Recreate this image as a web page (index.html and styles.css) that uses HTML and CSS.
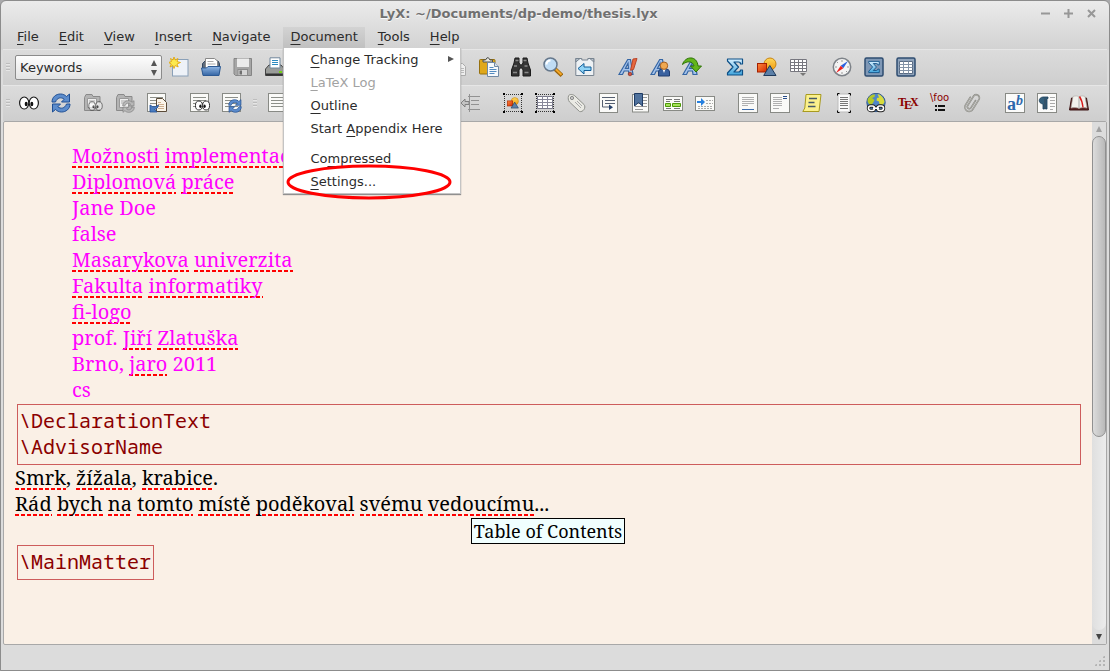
FILE: index.html
```
<!DOCTYPE html>
<html lang="en">
  <head>
    <meta charset="UTF-8" />
    <meta name="viewport" content="width=device-width, initial-scale=1.0" />
    <title>LyX: ~/Documents/dp-demo/thesis.lyx</title>
    <link rel="stylesheet" href="styles.css">
  </head>

  <body>
    <!-- Icon sprite -->
    <svg class="sprite" aria-hidden="true">
      <defs>
        <linearGradient id="g-blue" x1="0" y1="0" x2="0" y2="1">
          <stop offset="0" stop-color="#8fb6e4" /><stop offset="1" stop-color="#3465a4" />
        </linearGradient>
        <linearGradient id="g-sky" x1="0" y1="0" x2="0" y2="1">
          <stop offset="0" stop-color="#d8f0ff" /><stop offset="1" stop-color="#3fa4dc" />
        </linearGradient>
        <linearGradient id="g-orange" x1="0" y1="0" x2="0" y2="1">
          <stop offset="0" stop-color="#ffd95a" /><stop offset="1" stop-color="#f09a10" />
        </linearGradient>
        <linearGradient id="g-red" x1="0" y1="0" x2="1" y2="1">
          <stop offset="0" stop-color="#ff8a3c" /><stop offset="1" stop-color="#d42a00" />
        </linearGradient>
      </defs>

      <!-- shared pieces -->
      <symbol id="eyes" viewBox="0 0 20 14">
        <ellipse cx="5.2" cy="7" rx="4.6" ry="6" fill="#fff" stroke="#1c1c1c" stroke-width="1.2" />
        <ellipse cx="14.8" cy="7" rx="4.6" ry="6" fill="#fff" stroke="#1c1c1c" stroke-width="1.2" />
        <ellipse cx="7.2" cy="8" rx="1.5" ry="2.2" fill="#111" />
        <ellipse cx="12.8" cy="8" rx="1.5" ry="2.2" fill="#111" />
      </symbol>
      <symbol id="arrows" viewBox="0 0 20 20">
        <path d="M1 9C1 4 5 1 9.500 1c2.500 0 4.500 1 6 2.500L18.500 1v8h-8l2.700-2.800C10.500 3.800 6 4.500 4.500 9z" stroke-width="1" />
        <path d="M19 11c0 5-4 8-8.500 8-2.500 0-4.500-1-6-2.500L1.500 19v-8h8l-2.700 2.800c2.700 2.400 7.200 1.700 8.700-2.800z" stroke-width="1" />
      </symbol>
      <symbol id="page" viewBox="0 0 20 20">
        <rect x=".5" y=".5" width="18" height="18" fill="#fafaf8" stroke="#888a85" />
        <path d="M3 4.500h13M3 7.500h13M3 10.500h13M3 13.500h13" stroke="#8c8f89" />
      </symbol>
      <symbol id="letter-a" viewBox="0 0 20 20">
        <path d="M1 17.500h3.500l1.700-3.500h4.300l.5 3.500h4L12.500 2.500H9.700zM7.500 11.300l2.500-5 .5 5z" fill="#a4c2ea" stroke="#3465a4" stroke-width="1.200" fill-rule="evenodd" />
      </symbol>
      <symbol id="sigma" viewBox="0 0 20 20">
        <path d="M2.500 2h15v5h-2c0-1.500-.8-2-2-2H9l4.500 5L9 15h4.500c1.200 0 2-.8 2-2h2v5h-15v-2L8 10 2.500 4z" fill="url(#g-sky)" stroke="#0d4f86" stroke-width="1.200" stroke-linejoin="round" />
      </symbol>
      <symbol id="shapes" viewBox="0 0 20 20">
        <circle cx="13" cy="7" r="6" fill="url(#g-orange)" stroke="#c88410" />
        <rect x=".5" y="6.500" width="9" height="8.500" fill="url(#g-red)" stroke="#a42000" />
        <path d="M12.800 8.500L19 18.500H6.700z" fill="#5c80a8" stroke="#1f3a5c" stroke-linejoin="round" />
      </symbol>
      <symbol id="frame" viewBox="0 0 20 20">
        <path d="M1 1.500h18M1 18.500h18M1.500 1v18M18.500 1v18" stroke="#333" stroke-dasharray="1 1" />
        <path d="M0 0h2v2H0zM18 0h2v2h-2zM0 18h2v2H0zM18 18h2v2h-2z" fill="#000" />
      </symbol>

      <!-- standard toolbar -->
      <symbol id="i-new" viewBox="0 0 20 20">
        <rect x="3.500" y="2.500" width="15.500" height="16.500" fill="#eef2f8" stroke="#8aa0b8" />
        <path d="M5 0l1.200 3L9 1.500 8 4.500l3.500 1L8 7l1.200 3-3-1.500L5 11.500 4 8.500 1 10l1.300-3L-.5 5.500l3-1L1.500 1.500 4 3z" fill="#fce94f" stroke="#e0a000" stroke-width=".8" />
      </symbol>
      <symbol id="i-open" viewBox="0 0 20 20">
        <path d="M1.500 15V6.500L4 4h13l1.500 2.500V15" fill="#5e6b7c" stroke="#33475f" />
        <path d="M4.500 11V1.500h9l3 2.500v7z" fill="#fff" stroke="#888" />
        <path d="M6.500 4.500h6M6.500 7h8" stroke="#aaa" />
        <path d="M.5 11h5l1.500-1.500h12.500L18 18.500H2z" fill="url(#g-blue)" stroke="#2d5a94" />
      </symbol>
      <symbol id="i-save" viewBox="0 0 20 20">
        <path d="M1 1.500h17.500v17H2.500L1 17z" fill="#a6a6a6" stroke="#858585" />
        <rect x="4" y="1.500" width="12" height="8.500" fill="#ececec" />
        <rect x="5" y="12.500" width="9.500" height="6" fill="#d5d5d5" stroke="#8c8c8c" />
        <rect x="6.500" y="13.500" width="2.500" height="4" fill="#6f6f6f" />
      </symbol>
      <symbol id="i-print" viewBox="0 0 20 20">
        <path d="M.5 12L4 8h12l3.500 4v6.500H.5z" fill="#9a9c99" stroke="#444" />
        <path d="M5 11V.8h10V11z" fill="#fff" stroke="#71879c" />
        <path d="M7 3.500h6M7 5.500h6M7 7.500h6" stroke="#2c8ac0" />
        <path d="M1 17.500h18" stroke="#333" stroke-width="2" /><path d="M14 15h3" stroke="#73d216" stroke-width="2" />
      </symbol>
      <symbol id="i-undo" viewBox="0 0 20 20"><path d="M2 8l6-6v4c7 0 10 5 8 11-1-4-3-6-8-6v4z" fill="#aaa" stroke="#888" /></symbol>
      <symbol id="i-redo" viewBox="0 0 20 20"><path d="M18 8l-6-6v4C5 6 2 11 4 17c1-4 3-6 8-6v4z" fill="#aaa" stroke="#888" /></symbol>
      <symbol id="i-cut" viewBox="0 0 20 20"><path d="M5 2l7 12M15 2L8 14" stroke="#888" stroke-width="2" /><circle cx="6" cy="16" r="2.500" fill="none" stroke="#888" stroke-width="2" /><circle cx="14" cy="16" r="2.500" fill="none" stroke="#888" stroke-width="2" /></symbol>
      <symbol id="i-copy" viewBox="0 0 20 20">
        <rect x="2.500" y="1.500" width="10" height="13" fill="#eee" stroke="#999" />
        <path d="M8.500 6.500h7l3 3v9h-10z" fill="#eee" stroke="#aaa" /><path d="M10 11.500h7M10 13.500h7M10 15.500h7" stroke="#bbb" />
      </symbol>
      <symbol id="i-paste" viewBox="0 0 20 20">
        <rect x=".5" y="2.500" width="15.500" height="14.500" rx="1" fill="#e0a81a" stroke="#96700e" />
        <path d="M4 5V3h2.500L8 .8h1.500L11 3h2.500v2z" fill="#e8e8e2" stroke="#4f504d" />
        <path d="M8.500 5.500h7l4 4v10h-11z" fill="#f6f9fc" stroke="#7189a4" /><path d="M15.500 5.500v4h4" fill="#d6e0ea" stroke="#7189a4" />
        <path d="M10.500 10.500h4M10.500 12.500h7M10.500 14.500h7M10.500 16.500h5" stroke="#548bc0" />
      </symbol>
      <symbol id="i-find" viewBox="0 0 20 20">
        <path d="M4 1h4v5l1.500 2h1L12 6V1h4l1 5 2.500 7v6H12v-6l-1-2H9l-1 2v6H.5v-6L3 6z" fill="#353535" stroke="#1c1c1c" />
        <path d="M4.500 3.500h3M12.500 3.500h3M3 9h3M13.500 9h3M2 15.500h4M13.500 15.500h4" stroke="#8a8a8a" stroke-width="1.500" />
      </symbol>
      <symbol id="i-zoom" viewBox="0 0 20 20">
        <path d="M12 12l7 6.500" stroke="#9a6208" stroke-width="4" /><path d="M12.500 12l6 5.700" stroke="#f4a828" stroke-width="2" />
        <circle cx="7.500" cy="7.500" r="6.500" fill="#c0dcf4" stroke="#66788c" stroke-width="1.500" />
        <path d="M3.500 7.500c0-3 2-4 4-4" fill="none" stroke="#fff" stroke-width="2" />
      </symbol>
      <symbol id="i-back" viewBox="0 0 20 20">
        <path d="M.8 1.500h6v1.500h6V1.500h6v17H.8z" fill="#edf1f4" stroke="#788490" />
        <path d="M.8 5V1.500H5zM18.800 5V1.500h-4z" fill="#b7c2cc" stroke="#788490" />
        <path d="M3 11.500l6-5V10h7v3.500H9V17z" fill="#8fd3f6" stroke="#135e98" stroke-linejoin="round" />
      </symbol>
      <symbol id="i-spell" viewBox="0 0 20 20">
        <use href="#letter-a" /><path d="M15 2l4-.5-3.500 11-3 .8z" fill="#e8683c" stroke="#b8442a" /><circle cx="12" cy="17" r="1.800" fill="#d05040" stroke="#8a3020" stroke-width=".7" />
      </symbol>
      <symbol id="i-thes" viewBox="0 0 20 20">
        <use href="#letter-a" /><path d="M8.500 19v-4c0-2.500 2-3 5.500-3s5.500.5 5.500 3v4z" fill="#3a62a0" stroke="#1f3d70" />
        <path d="M12.500 12l1.500 4 1.500-4z" fill="#fff" /><circle cx="14" cy="8.700" r="3.700" fill="#f0a850" stroke="#a86020" />
      </symbol>
      <symbol id="i-auto" viewBox="0 0 20 20">
        <use href="#letter-a" /><path d="M.5 7.500C3-1 15-2 16 9h3.500l-5.500 6-5.500-6H12C11 4 5 3.500.5 7.500z" fill="#63b51c" stroke="#2d7404" />
      </symbol>
      <symbol id="i-table" viewBox="0 0 20 20">
        <rect x="2" y="2" width="16" height="12" fill="#fff" />
        <path d="M1.500 2.500h16v12h-16zM1.500 5.500h16M1.500 8.500h16M1.500 11.500h16M5.500 2.500v12M9.500 2.500v12M13.500 2.500v12" fill="none" stroke="#77777f" />
        <path d="M11 16h6l-3 3z" fill="#777" />
      </symbol>
      <symbol id="i-compass" viewBox="0 0 20 20">
        <circle cx="10" cy="10" r="8.700" fill="#f4f4f4" stroke="#7d8288" stroke-width="1.500" />
        <path d="M10 3v2M10 15v2M3 10h2M15 10h2M5 5l1 1M14 14l1 1" stroke="#999" />
        <path d="M8.700 8.700L16 4l-4.700 7.300z" fill="#2a62e0" /><path d="M11.300 11.300L4 16l4.700-7.300z" fill="#ee2020" />
      </symbol>
      <symbol id="i-mathbar" viewBox="0 0 20 20">
        <rect x="1" y="1" width="18" height="18" rx="1.500" fill="#7f98b6" stroke="#2e4c70" stroke-width="1.500" /><use href="#sigma" x="3" y="3" width="14" height="14" />
      </symbol>
      <symbol id="i-tablebar" viewBox="0 0 20 20">
        <rect x="1" y="1" width="18" height="18" rx="1.500" fill="#8fa3bb" stroke="#2e4c70" stroke-width="1.500" />
        <path d="M3.500 4.500h13v12h-13z" fill="#fff" stroke="#5a6c84" /><path d="M3.500 7.500h13M3.500 10.500h13M3.500 13.500h13M7.500 4.500v12M12.500 4.500v12" stroke="#8494a8" />
      </symbol>

      <!-- view and extra toolbars -->
      <symbol id="i-view" viewBox="0 0 20 20"><use href="#eyes" x="0" y="3" width="20" height="14" /></symbol>
      <symbol id="i-update" viewBox="0 0 20 20"><use href="#arrows" fill="#5c8ccc" stroke="#1f4f94" /></symbol>
      <symbol id="i-mview" viewBox="0 0 20 20">
        <path d="M1.500 17.500V4.500L3 1.500h6l1 2h7v14z" fill="#b4b4b4" stroke="#8a8a8a" /><path d="M4.500 5.500h9v9h-9z" fill="#eee" stroke="#999" />
        <path d="M6 8h6M6 10h6" stroke="#aaa" /><g opacity=".65"><use href="#eyes" x="5" y="8" width="15" height="10" /></g>
      </symbol>
      <symbol id="i-mupdate" viewBox="0 0 20 20">
        <path d="M1.500 17.500V4.500L3 1.500h6l1 2h7v14z" fill="#b4b4b4" stroke="#8a8a8a" /><path d="M4.500 5.500h9v9h-9z" fill="#eee" stroke="#999" />
        <path d="M6 8h6M6 10h6" stroke="#aaa" /><use href="#arrows" x="7" y="7" width="13" height="13" fill="#b8b8b8" stroke="#7e7e7e" />
      </symbol>
      <symbol id="i-master" viewBox="0 0 20 20">
        <use href="#page" /><path d="M9.500 5.500h6l4 4v9h-10z" fill="#fbf5ea" stroke="#5a4a38" /><path d="M11 9.500h3M11 11.500h6M11 13.500h6M11 15.500h6" stroke="#d0b090" />
        <path d="M3 12v7h7l-2.500-2.500c2.500-.5 3.500-2 4-4.500-2 1.500-4 2-6 1.500z" fill="#4a7cc0" stroke="#1f4f94" stroke-width=".8" />
      </symbol>
      <symbol id="i-pview" viewBox="0 0 20 20"><use href="#page" /><use href="#eyes" x="5" y="7" width="15" height="11" /></symbol>
      <symbol id="i-pupdate" viewBox="0 0 20 20"><use href="#page" /><use href="#arrows" x="6" y="6" width="14" height="14" fill="#5c8ccc" stroke="#1f4f94" /></symbol>
      <symbol id="i-para" viewBox="0 0 20 20"><use href="#page" /></symbol>
      <symbol id="i-outdent" viewBox="0 0 20 20">
        <path d="M8 3.500h12M11 7.500h8M11 11.500h8M8 16.500h12M9.500 1v18" stroke="#929292" /><path d="M1 10l4-4v2.500h4v3H5V14z" fill="#c4c4c4" stroke="#808080" />
      </symbol>
      <symbol id="i-fig" viewBox="0 0 20 20"><use href="#frame" /><use href="#shapes" x="4" y="4" width="12" height="12" /></symbol>
      <symbol id="i-ftable" viewBox="0 0 20 20">
        <use href="#frame" /><path d="M2.500 3.500h15v12h-15z" fill="#fff" stroke="#778" /><path d="M2.500 6.500h15M2.500 9.500h15M2.500 12.500h15M7.500 3v12M12.500 3v12" stroke="#889" />
      </symbol>
      <symbol id="i-tag" viewBox="0 0 20 20">
        <path d="M1.500 3C2 1 6 1 8 3l9 8.500c2.500 3-1 8-4.500 7L2.500 9C1 7 1 5 1.500 3z" fill="#eaeae4" stroke="#8f918c" /><circle cx="5" cy="5" r="1.600" fill="#ccc" stroke="#888" />
        <path d="M8 9l6 6M10 8l5 5" stroke="#aaa" />
      </symbol>
      <symbol id="i-xref" viewBox="0 0 20 20">
        <rect x=".5" y=".5" width="18" height="19" fill="#fafaf8" stroke="#888a85" />
        <path d="M3 4.500h13M6 7.500h10M6 10.500h10M3.500 7v7h8" fill="none" stroke="#555f70" /><path d="M10 11.500l4 2.700-4 2.700z" fill="#26406a" />
      </symbol>
      <symbol id="i-cite" viewBox="0 0 20 20">
        <rect x="1.500" y="1.500" width="16" height="17.500" fill="#fafaf8" stroke="#888a85" /><path d="M4 4.500h12M4 7.500h12M4 10.500h12M4 13.500h12M4 16.500h8" stroke="#999" />
        <path d="M3.500.5h8V13l-4-3.500-4 3.500z" fill="#4f719c" stroke="#1e3b64" />
      </symbol>
      <symbol id="i-index" viewBox="0 0 20 20">
        <rect x=".5" y="3.500" width="19" height="14" fill="#fafaf8" stroke="#888a85" /><path d="M3 6.500h6M11 6.500h6M3 8.500h4M11 8.500h6M3 15.500h5M11 15.500h6" stroke="#777" />
        <path d="M2.500 10.500h5v3h-5zM9.500 10.500h8v3h-8z" fill="#a5e05a" stroke="#4c9a06" />
      </symbol>
      <symbol id="i-nomencl" viewBox="0 0 20 20">
        <rect x=".5" y="3.500" width="19" height="14" fill="#fafaf8" stroke="#888a85" /><path d="M11 7.500h7M11 10.500h7M3 13.500h15M3 15.500h15" stroke="#aaa" stroke-dasharray="2 1" />
        <path d="M2 8h4V5l4 4-4 4v-3H2z" fill="#2680e0" />
      </symbol>
      <symbol id="i-foot" viewBox="0 0 20 20">
        <rect x=".5" y=".5" width="19" height="19" fill="#fafaf8" stroke="#888a85" /><path d="M4 4.500h12M4 6.500h12M4 8.500h12M4 10.500h12M4 12.500h6" stroke="#b0b0b0" /><path d="M4 16.500h12" stroke="#3a6cb0" />
      </symbol>
      <symbol id="i-margin" viewBox="0 0 20 20">
        <rect x=".5" y=".5" width="19" height="19" fill="#fafaf8" stroke="#888a85" /><path d="M3 4.500h9M3 6.500h9M3 8.500h9M3 10.500h9M3 12.500h9M3 15.500h6" stroke="#b0b0b0" /><path d="M13 3.500h4M13 5.500h4" stroke="#2a4f8c" />
      </symbol>
      <symbol id="i-note" viewBox="0 0 20 20">
        <path d="M4 1.500h15l-2 17H.8L2.800 15z" fill="#fbf18c" stroke="#a89a20" /><path d="M7 5.500h8M6.500 9.500h6M6 13.500h7.500" stroke="#465a68" stroke-width="1.300" />
      </symbol>
      <symbol id="i-box" viewBox="0 0 20 20">
        <rect x="4" y="1" width="12" height="18" fill="#fafafa" stroke="#bbb" /><path d="M5.500.5h-2v2M14.500.5h2v2M5.500 19.500h-2v-2M14.500 19.500h2v-2" fill="none" stroke="#000" />
        <path d="M6 4.500h8M6 6.500h8M6 8.500h8M6 10.500h8M6 12.500h8M6 15.500h8" stroke="#777" />
      </symbol>
      <symbol id="i-web" viewBox="0 0 20 20">
        <circle cx="10" cy="9.500" r="9.200" fill="#4f86c8" stroke="#33588c" />
        <path d="M2 5.500C4 2 7 1 9 1.500L8.500 4 6 5l2.500 2L7 10l-2 2C2 11 1 8 2 5.500z" fill="#b4c828" />
        <path d="M11.500 1c4 1 6.500 4 7 8l-2 3.500-3-1-.5-3-2.500-1 .5-2.500 2-.5z" fill="#d8dc3c" />
        <g fill="none" stroke="#222" stroke-width="3.400"><rect x="2.500" y="13" width="6" height="4.500" rx="2.200" /><rect x="11.500" y="13" width="6" height="4.500" rx="2.200" /><path d="M7 15.200h6" /></g>
        <g fill="none" stroke="#fff" stroke-width="1.600"><rect x="2.500" y="13" width="6" height="4.500" rx="2.200" /><rect x="11.500" y="13" width="6" height="4.500" rx="2.200" /><path d="M7 15.200h6" /></g>
      </symbol>
      <symbol id="i-clip" viewBox="0 0 20 20">
        <g fill="none" transform="rotate(32 10 10)">
          <path d="M5.500 6v9a4.300 4.300 0 0 0 8.600 0V3.500a3.200 3.200 0 0 0-6.400 0V14.500a2 2 0 0 0 4 0V6" stroke="#858580" stroke-width="1.500" stroke-linecap="round" />
          <path d="M5.500 6v9a4.300 4.300 0 0 0 8.600 0V3.500a3.200 3.200 0 0 0-6.400 0V14.500a2 2 0 0 0 4 0V6" stroke="#c8c8c2" stroke-width=".5" />
        </g>
      </symbol>
      <symbol id="i-frame" viewBox="0 0 20 20"><rect x=".5" y=".5" width="19" height="19" fill="#fbfbfa" stroke="#888a85" /></symbol>
      <symbol id="i-pilcrow" viewBox="0 0 20 20">
        <rect x=".5" y=".5" width="19" height="19" fill="#fbfbfa" stroke="#888a85" /><path d="M11 4H6C1 4.500 1 10.500 6 11v5h1.500V5.500H8.500V16H10V5.500h1z" fill="#35607c" stroke="#1c3e58" stroke-width=".8" />
        <path d="M13 4.500h5M13 7.500h5M13 10.500h5M13 13.500h5M13 16.500h3" stroke="#aaa" />
      </symbol>
      <symbol id="i-dict" viewBox="0 0 20 20">
        <path d="M.5 17L2.500 5h15l2 12z" fill="#5a2424" stroke="#3c1414" />
        <path d="M2 15L4 3.500c2.500-1 4.700-.7 6 .5 1.300-1.200 3.500-1.500 6-.5L18 15c-3-.7-6-.7-8 .5-2-1.200-5-1.200-8-.5z" fill="#f2f2ee" stroke="#b0aca6" stroke-width=".6" />
        <path d="M10 4v11" stroke="#aaa" /><path d="M10.500 3.500c2 3 3 6.500 3.500 11" fill="none" stroke="#d81818" stroke-width="1.400" />
      </symbol>
    </svg>

    <div class="window">
      <header class="titlebar">
        <h1 class="title">LyX: ~/Documents/dp-demo/thesis.lyx</h1>
        <button class="win-btn" aria-label="Minimize"><svg viewBox="0 0 9 9"><path d="M0 4.500h9" /></svg></button>
        <button class="win-btn" aria-label="Maximize"><svg viewBox="0 0 9 9"><path d="M0 4.500h9M4.500 0v9" /></svg></button>
        <button class="win-btn" aria-label="Close"><svg viewBox="0 0 9 9"><path d="M1 1l7 7M8 1L1 8" /></svg></button>
      </header>

      <nav class="menubar">
        <button class="menu-btn"><u>F</u>ile</button>
        <button class="menu-btn"><u>E</u>dit</button>
        <button class="menu-btn"><u>V</u>iew</button>
        <button class="menu-btn"><u>I</u>nsert</button>
        <button class="menu-btn"><u>N</u>avigate</button>
        <div class="menu-wrap">
          <button class="menu-btn active" aria-expanded="true"><u>D</u>ocument</button>
          <div class="menu" role="menu">
            <button class="menu-item" role="menuitem"><span><u>C</u>hange Tracking</span><svg class="submenu-arrow" viewBox="0 0 6 6"><path d="M0 0l6 3-6 3z" /></svg></button>
            <button class="menu-item" role="menuitem" disabled><span><u>L</u>aTeX Log</span></button>
            <button class="menu-item" role="menuitem"><span><u>O</u>utline</span></button>
            <button class="menu-item" role="menuitem"><span>Start <u>A</u>ppendix Here</span></button>
            <div class="menu-sep"></div>
            <button class="menu-item" role="menuitem"><span>Co<u>m</u>pressed</span></button>
            <button class="menu-item" role="menuitem"><span><u>S</u>ettings...</span></button>
            <svg class="highlight" viewBox="0 0 166 36"><ellipse cx="83" cy="18" rx="81" ry="16" /></svg>
          </div>
        </div>
        <button class="menu-btn"><u>T</u>ools</button>
        <button class="menu-btn"><u>H</u>elp</button>
      </nav>

      <div class="toolbar">
        <span class="grip"></span>
        <div class="combo">
          <select class="layout-select" aria-label="Paragraph layout">
            <option>Keywords</option>
            <option>Standard</option>
            <option>Title</option>
          </select>
          <svg class="combo-arrows" viewBox="0 0 6 16"><path d="M3 0l3 6H0zM3 16l3-6H0z" /></svg>
        </div>
        <button class="tool" aria-label="New document"><svg><use href="#i-new" /></svg></button>
        <button class="tool" aria-label="Open document"><svg><use href="#i-open" /></svg></button>
        <button class="tool" aria-label="Save document"><svg><use href="#i-save" /></svg></button>
        <button class="tool" aria-label="Print document"><svg><use href="#i-print" /></svg></button>
        <span class="sep"></span>
        <button class="tool" aria-label="Undo"><svg><use href="#i-undo" /></svg></button>
        <button class="tool" aria-label="Redo"><svg><use href="#i-redo" /></svg></button>
        <span class="sep"></span>
        <button class="tool" aria-label="Check spelling"><svg><use href="#i-spell" /></svg></button>
        <button class="tool" aria-label="Cut"><svg><use href="#i-cut" /></svg></button>
        <button class="tool" aria-label="Copy"><svg><use href="#i-copy" /></svg></button>
        <button class="tool" aria-label="Paste"><svg><use href="#i-paste" /></svg></button>
        <button class="tool" aria-label="Find and replace"><svg><use href="#i-find" /></svg></button>
        <button class="tool" aria-label="Advanced find"><svg><use href="#i-zoom" /></svg></button>
        <button class="tool" aria-label="Navigate back"><svg><use href="#i-back" /></svg></button>
        <span class="sep"></span>
        <button class="tool" aria-label="Toggle emphasis"><svg><use href="#i-spell" /></svg></button>
        <button class="tool" aria-label="Toggle noun"><svg><use href="#i-thes" /></svg></button>
        <button class="tool" aria-label="Apply last"><svg><use href="#i-auto" /></svg></button>
        <span class="sep"></span>
        <button class="tool" aria-label="Insert math"><svg><use href="#sigma" /></svg></button>
        <button class="tool" aria-label="Insert graphics"><svg><use href="#shapes" /></svg></button>
        <button class="tool" aria-label="Insert table"><svg><use href="#i-table" /></svg></button>
        <span class="sep"></span>
        <button class="tool" aria-label="Toggle outline"><svg><use href="#i-compass" /></svg></button>
        <button class="tool" aria-label="Toggle math toolbar"><svg><use href="#i-mathbar" /></svg></button>
        <button class="tool" aria-label="Toggle table toolbar"><svg><use href="#i-tablebar" /></svg></button>
      </div>

      <div class="toolbar">
        <span class="grip"></span>
        <button class="tool" aria-label="View"><svg><use href="#i-view" /></svg></button>
        <button class="tool" aria-label="Update"><svg><use href="#i-update" /></svg></button>
        <button class="tool" aria-label="View master"><svg><use href="#i-mview" /></svg></button>
        <button class="tool" aria-label="Update master"><svg><use href="#i-mupdate" /></svg></button>
        <button class="tool" aria-label="Enable synchronization"><svg><use href="#i-master" /></svg></button>
        <span class="sep"></span>
        <button class="tool" aria-label="View other formats"><svg><use href="#i-pview" /></svg></button>
        <button class="tool" aria-label="Update other formats"><svg><use href="#i-pupdate" /></svg></button>
        <span class="grip wide"></span>
        <button class="tool" aria-label="Default layout"><svg><use href="#i-para" /></svg></button>
        <button class="tool" aria-label="Numbered list"><svg><use href="#i-para" /></svg></button>
        <button class="tool" aria-label="Itemized list"><svg><use href="#i-para" /></svg></button>
        <button class="tool" aria-label="List"><svg><use href="#i-para" /></svg></button>
        <button class="tool" aria-label="Description"><svg><use href="#i-para" /></svg></button>
        <button class="tool" aria-label="Increase depth"><svg><use href="#i-outdent" /></svg></button>
        <button class="tool" aria-label="Decrease depth"><svg><use href="#i-outdent" /></svg></button>
        <span class="sep"></span>
        <button class="tool" aria-label="Figure float"><svg><use href="#i-fig" /></svg></button>
        <button class="tool" aria-label="Table float"><svg><use href="#i-ftable" /></svg></button>
        <button class="tool" aria-label="Label"><svg><use href="#i-tag" /></svg></button>
        <button class="tool" aria-label="Cross-reference"><svg><use href="#i-xref" /></svg></button>
        <button class="tool" aria-label="Citation"><svg><use href="#i-cite" /></svg></button>
        <button class="tool" aria-label="Index entry"><svg><use href="#i-index" /></svg></button>
        <button class="tool" aria-label="Nomenclature"><svg><use href="#i-nomencl" /></svg></button>
        <span class="sep"></span>
        <button class="tool" aria-label="Footnote"><svg><use href="#i-foot" /></svg></button>
        <button class="tool" aria-label="Margin note"><svg><use href="#i-margin" /></svg></button>
        <button class="tool" aria-label="Note"><svg><use href="#i-note" /></svg></button>
        <button class="tool" aria-label="Box"><svg><use href="#i-box" /></svg></button>
        <button class="tool" aria-label="Hyperlink"><svg><use href="#i-web" /></svg></button>
        <button class="tool" aria-label="TeX code">
          <svg viewBox="0 0 20 20" class="tex"><text x="0" y="13">T<tspan dx="-2" dy="3">E</tspan><tspan dx="-2" dy="-3">X</tspan></text></svg>
        </button>
        <button class="tool" aria-label="Math macro">
          <svg viewBox="0 0 20 20" class="macro"><text x="0" y="8">\foo</text><path d="M5 12h2v2H5zM5 16h2v2H5zM8 12h7v2H8zM8 16h7v2H8z" /></svg>
        </button>
        <button class="tool" aria-label="Include file"><svg><use href="#i-clip" /></svg></button>
        <span class="sep"></span>
        <button class="tool" aria-label="Text style">
          <svg viewBox="0 0 20 20" class="style-ab"><use href="#i-frame" /><text x="2" y="17" class="style-a">a<tspan class="style-b" dy="-5">b</tspan></text></svg>
        </button>
        <button class="tool" aria-label="Paragraph settings"><svg><use href="#i-pilcrow" /></svg></button>
        <button class="tool" aria-label="Thesaurus"><svg><use href="#i-dict" /></svg></button>
      </div>

      <div class="workspace">
        <main class="document">
          <div class="meta">
            <p><span class="sp">Možnosti</span> <span class="sp">implementace</span></p>
            <p><span class="sp">Diplomová</span> <span class="sp">práce</span></p>
            <p>Jane Doe</p>
            <p>false</p>
            <p><span class="sp">Masarykova</span> <span class="sp">univerzita</span></p>
            <p><span class="sp">Fakulta</span> <span class="sp">informatiky</span></p>
            <p><span class="sp">fi-logo</span></p>
            <p>prof. <span class="sp">Jiří</span> <span class="sp">Zlatuška</span></p>
            <p>Brno, <span class="sp">jaro</span> 2011</p>
            <p>cs</p>
          </div>
          <div class="ert">
            <p>\DeclarationText</p>
            <p>\AdvisorName</p>
          </div>
          <p><span class="sp">Smrk</span>, <span class="sp">žížala</span>, <span class="sp">krabice</span>.</p>
          <p><span class="sp">Rád</span> <span class="sp">bych</span> <span class="sp">na</span> <span class="sp">tomto</span> <span class="sp">místě</span> <span class="sp">poděkoval</span> <span class="sp">svému</span> <span class="sp">vedoucímu</span>...</p>
          <div class="toc-row"><button class="toc">Table of Contents</button></div>
          <div class="ert inline">
            <p>\MainMatter</p>
          </div>
        </main>
        <div class="scrollbar">
          <button class="scroll-btn up" aria-label="Scroll up"><svg viewBox="0 0 6 6"><path d="M3 0l3 6H0z" /></svg></button>
          <div class="track"><div class="thumb"></div></div>
          <button class="scroll-btn" aria-label="Scroll down"><svg viewBox="0 0 6 6"><path d="M3 6l3-6H0z" /></svg></button>
        </div>
      </div>

      <footer class="statusbar"><span class="resize-grip"></span></footer>
    </div>
  </body>
</html>
```
FILE: styles.css
```
* {
  margin: 0;
  padding: 0;
  box-sizing: border-box;
}

body {
  height: 100vh;
  background: #a9a9ab;
  color: #2b2b2b;
  font-family: "DejaVu Sans", sans-serif;
  font-size: 13px;
  overflow: hidden;
}

button {
  border: none;
  background: none;
  color: inherit;
  font: inherit;
}

.sprite {
  position: absolute;
  width: 0;
  height: 0;
}

.window {
  height: 100vh;
  display: flex;
  flex-direction: column;
  background: linear-gradient(#ebebeb, #d2d2d2 48px, #dcdcdc 49px);
  border: 1px solid #8c8c8c;
  border-radius: 6px 6px 0 0;
  padding: 0 2px;
}

/* Title bar */
.titlebar {
  height: 26px;
  display: flex;
  align-items: center;
  padding: 0 4px 2px 0;
}

.title {
  flex: 1;
  text-align: center;
  font-size: 13px;
  font-weight: bold;
  color: #707070;
  text-shadow: 0 1px 0 #fafafa;
}

.win-btn {
  width: 23px;
  height: 23px;
  display: flex;
  align-items: center;
  justify-content: center;
}

.win-btn svg {
  width: 9px;
  height: 9px;
  stroke: #979797;
  stroke-width: 2;
}

/* Menu bar */
.menubar {
  height: 22px;
  display: flex;
  gap: 6px;
  padding-left: 7px;
}

.menu-btn {
  height: 21px;
  padding: 0 7px 3px;
}

.menu-btn.active {
  background: linear-gradient(#d3d3d3, #c0c0c0);
}

u {
  text-underline-offset: 3px;
  text-decoration-thickness: 1px;
}

.menu-wrap {
  position: relative;
}

.menu {
  position: absolute;
  top: 21px;
  left: 0;
  z-index: 10;
  background: #fff;
  border: 1px solid #c4c4c4;
  border-top: none;
  box-shadow: 0 1px 1px #909090;
}

.menu-item {
  width: 100%;
  height: 23px;
  display: flex;
  align-items: center;
  justify-content: space-between;
  padding: 0 6px 1px 26px;
  min-width: 176px;
  white-space: nowrap;
}

.menu-item:disabled {
  color: #a2a2a2;
}

.menu-sep {
  height: 7px;
}

.submenu-arrow {
  width: 6px;
  height: 6px;
  fill: #555;
}

.highlight {
  position: absolute;
  left: 2px;
  bottom: -7px;
  width: 166px;
  height: 36px;
  fill: none;
  stroke: #f00;
  stroke-width: 3;
}

/* Toolbars */
.toolbar {
  height: 36px;
  display: flex;
  align-items: center;
  background: linear-gradient(#dcdcdc, #cecece);
  box-shadow: inset 0 1px 0 #e6e6e6;
}

.grip {
  width: 10px;
  height: 8px;
  flex: none;
  background: repeating-linear-gradient(#bdbdbd 0 1px, #e6e6e6 1px 2px, transparent 2px 3px) center / 4px 8px no-repeat;
}

.grip.wide {
  width: 14px;
}

.sep {
  width: 11px;
  flex: none;
}

.combo {
  position: relative;
  width: 148px;
  margin-left: 2px;
}

.layout-select {
  appearance: none;
  width: 147px;
  height: 25px;
  padding: 0 4px;
  color: inherit;
  font: inherit;
  background: linear-gradient(#fdfdfd, #e4e4e4);
  border: 1px solid #8b8b8b;
  border-radius: 2px;
}

.combo-arrows {
  position: absolute;
  top: 5px;
  right: 6px;
  width: 6px;
  height: 16px;
  fill: #555;
  pointer-events: none;
}

.tool {
  width: 32px;
  height: 32px;
  flex: none;
  display: flex;
  align-items: center;
  justify-content: center;
}

.tool svg {
  width: 20px;
  height: 20px;
}

.tex {
  font: bold 12px "Liberation Serif", serif;
  fill: #8b0000;
  overflow: visible;
}

.macro {
  font-size: 10px;
  fill: #111;
  overflow: visible;
}

.macro text {
  fill: #8b0000;
}

.style-ab {
  font-family: "Liberation Serif", serif;
  font-weight: bold;
  fill: #2d68ac;
  overflow: visible;
}

.style-a {
  font-size: 18px;
}

.style-b {
  font-size: 14px;
  font-style: italic;
}

/* Editor */
.workspace {
  flex: 1;
  min-height: 0;
  display: flex;
  background: #faf0e6;
  border: 1px solid #a8a8a8;
  border-radius: 2px;
}

.document {
  flex: 1;
  padding: 21px 11px;
  color: #000;
  font-family: "Noto Serif", "Droid Serif", "DejaVu Serif", serif;
  font-size: 20px;
  line-height: 26px;
}

.meta {
  padding-left: 57px;
  color: #f0f;
}

/* misspelled word */
.sp {
  display: inline-block;
  background: linear-gradient(90deg, #f00 4px, transparent 4px) 0 23px / 6px 2px repeat-x;
}

.ert {
  margin: 1px 0 0 2px;
  padding: 3px 2px 4px 1px;
  border: 1px solid #cd5c5c;
  color: #8b0000;
  font-family: "Noto Sans Mono", "Droid Sans Mono", "DejaVu Sans Mono", monospace;
}

.ert.inline {
  width: max-content;
}

.toc-row {
  display: flex;
  justify-content: center;
  margin-top: 1px;
}

.toc {
  padding: 0 2px;
  height: 26px;
  line-height: 22px;
  background: #f0ffff;
  border: 1px solid #000;
  font-size: 18px;
}

.scrollbar {
  width: 14px;
  display: flex;
  flex-direction: column;
  background: #dcdcdc;
}

.scroll-btn {
  height: 14px;
  display: flex;
  align-items: center;
  justify-content: center;
}

.scroll-btn svg {
  width: 6px;
  height: 6px;
  fill: #444;
}

.scroll-btn.up svg {
  fill: #a0a0a0;
}

.track {
  flex: 1;
  background: linear-gradient(90deg, #dfdfdf, #ececec);
  border-radius: 7px;
}

.thumb {
  height: 61%;
  background: linear-gradient(90deg, #dcdcdc, #b9b9b9);
  border: 1px solid #909090;
  border-radius: 7px;
}

.statusbar {
  height: 25px;
  display: flex;
  align-items: flex-end;
  justify-content: flex-end;
  padding: 4px 2px;
}

.resize-grip {
  width: 11px;
  height: 11px;
  background: radial-gradient(circle, #b4b4b4 1px, transparent 1px) 0 0 / 4px 4px;
  clip-path: polygon(100% 0, 100% 100%, 0 100%);
}
```
